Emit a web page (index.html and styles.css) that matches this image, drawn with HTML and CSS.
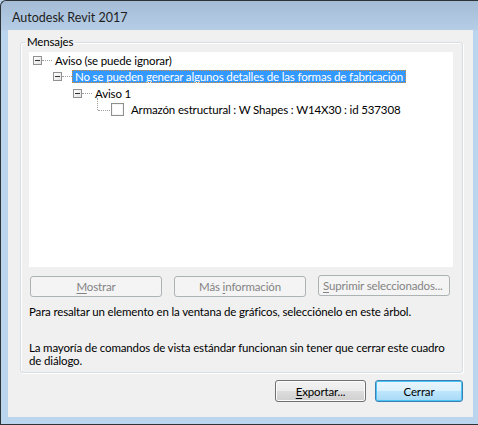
FILE: index.html
```html
<!DOCTYPE html>
<html lang="es">
<head>
<meta charset="utf-8">
<title>Autodesk Revit 2017</title>
<link rel="stylesheet" href="styles.css">
</head>
<body>
<div class="window">
  <div class="titlebar">Autodesk Revit 2017</div>
  <div class="client">
    <fieldset class="group">
      <legend class="group-label">Mensajes</legend>
      <div class="tree">
        <div class="row lvl0">
          <span class="expander"></span><span class="hline"></span><span class="label">Aviso (se puede ignorar)</span>
        </div>
        <div class="row lvl1">
          <span class="expander"></span><span class="hline"></span><span class="label selected">No se pueden generar algunos detalles de las formas de fabricación</span>
        </div>
        <div class="row lvl2">
          <span class="expander"></span><span class="hline"></span><span class="label">Aviso 1</span>
        </div>
        <div class="row lvl3">
          <span class="elbow"></span><span class="checkbox"></span><span class="label leaf">Armazón estructural : W Shapes : W14X30 : id 537308</span>
        </div>
      </div>
      <div class="actions">
        <button class="btn" disabled><u>M</u>ostrar</button>
        <button class="btn" disabled>Más <u>i</u>nformación</button>
        <button class="btn btn-left" disabled><u>S</u>uprimir seleccionados...</button>
      </div>
      <p class="hint">Para resaltar un elemento en la ventana de gráficos, selecciónelo en este árbol.</p>
      <p class="note">La mayoría de comandos de vista estándar funcionan sin tener que cerrar este cuadro de diálogo.</p>
    </fieldset>
    <div class="footer">
      <button class="btn btn-normal btn-export"><u>E</u>xportar...</button>
      <button class="btn btn-default btn-close">Cerrar</button>
    </div>
  </div>
</div>
</body>
</html>
```

FILE: styles.css
```css
html, body {
  margin: 0;
  padding: 0;
  background: #bcd5ee;
}

body {
  font-family: Lato, "Liberation Sans", Arial, sans-serif;
  font-size: 11.5px;
  letter-spacing: -0.15px;
  color: #000;
}

.window {
  box-sizing: border-box;
  width: 478px;
  height: 425px;
  border: 1px solid #2e3338;
  border-right: none;
  border-radius: 6px 0 0 0;
  background: linear-gradient(#a4bcd6 0px, #b6cde6 29px, #bcd5ee 30px, #bcd5ee 100%);
  padding: 0 5px 7px 7px;
  display: flex;
  flex-direction: column;
}

.titlebar {
  height: 29px;
  line-height: 34px;
  padding-left: 4px;
  color: #1e1e1e;
  font-size: 12.5px;
  letter-spacing: 0;
  white-space: nowrap;
}

.client {
  flex: 1;
  background: #f0f0f0;
  display: flex;
  flex-direction: column;
}

.group {
  margin: 5px 10px 0 12px;
  padding: 0 0 5px 0;
  border: 1px solid #d5dfe5;
  border-radius: 3px;
  box-shadow: 1px 1px 0 #fff, inset 1px 1px 0 #fff;
  min-width: 0;
}

.group-label {
  margin-left: 4px;
  padding: 0 2px;
  line-height: 14px;
}

.tree {
  margin: 3px 9px 0 8px;
  height: 215px;
  background: #fff;
  padding-top: 0;
  box-sizing: border-box;
}

.row {
  display: flex;
  align-items: center;
  height: 16.5px;
  white-space: nowrap;
}

.lvl0 { padding-left: 4px; }
.lvl1 { padding-left: 24px; }
.lvl2 { padding-left: 44px; }
.lvl3 { padding-left: 64px; }

.expander {
  position: relative;
  box-sizing: border-box;
  width: 9px;
  height: 9px;
  border: 1px solid #919191;
  background: linear-gradient(135deg, #ffffff, #e3e3e3);
  flex: none;
}

.expander::after {
  content: "";
  position: absolute;
  left: 1px;
  top: 3px;
  width: 5px;
  height: 1px;
  background: #333;
}

.hline {
  width: 10px;
  height: 0;
  border-top: 1px dotted #a0a0a0;
  flex: none;
}

.label {
  padding: 0 3px;
  line-height: 13px;
}

.selected {
  background: #3399ff;
  color: #fff;
  outline: 1px dotted #d88c3a;
  outline-offset: -1px;
}

.elbow {
  position: relative;
  width: 18px;
  height: 100%;
  flex: none;
}

.elbow::before {
  content: "";
  position: absolute;
  left: 4px;
  top: -4px;
  height: 12px;
  border-left: 1px dotted #a0a0a0;
}

.elbow::after {
  content: "";
  position: absolute;
  left: 5px;
  top: 8px;
  width: 12px;
  border-top: 1px dotted #a0a0a0;
}

.checkbox {
  box-sizing: border-box;
  width: 13px;
  height: 13px;
  border: 1px solid #8f8f8f;
  background: #fff;
  box-shadow: inset 0 0 0 1px #f4f4f4;
  flex: none;
}

.leaf {
  margin-left: 4px;
}

.actions {
  display: flex;
  gap: 12px;
  margin: 9px 0 0 9px;
}

.btn {
  box-sizing: border-box;
  font-family: inherit;
  font-size: 11.5px;
  letter-spacing: -0.15px;
  height: 21px;
  width: 132px;
  padding: 0;
  border-radius: 3px;
  border: 1px solid #adb2b5;
  background: #f4f4f4;
  color: #838383;
  white-space: nowrap;
}

.btn u {
  text-decoration-thickness: 1px;
  text-underline-offset: 2px;
}

.btn-left {
  text-align: left;
  padding-left: 4px;
  margin-top: -1px;
}

.hint {
  margin: 7px 0 0 8px;
  line-height: 15px;
}

.note {
  margin: 22px 8px 0 8px;
  line-height: 13px;
}

.footer {
  display: flex;
  justify-content: flex-end;
  gap: 9px;
  padding: 7px 10px 0 0;
}

.btn-normal {
  height: 22px;
  color: #000;
  border-color: #707070;
  background: linear-gradient(#f2f2f2 0%, #ebebeb 50%, #dddddd 50%, #cfcfcf 100%);
  box-shadow: inset 0 0 0 1px #fbfbfb;
}

.btn-export { width: 91px; }

.btn-default {
  height: 22px;
  color: #000;
  border-color: #3c7fb1;
  background: linear-gradient(#eaf6fd 0%, #d9f0fc 50%, #bee6fd 50%, #a7d9f5 100%);
  box-shadow: inset 0 0 0 1px #48c4f6;
}

.btn-close { width: 88px; }
```
